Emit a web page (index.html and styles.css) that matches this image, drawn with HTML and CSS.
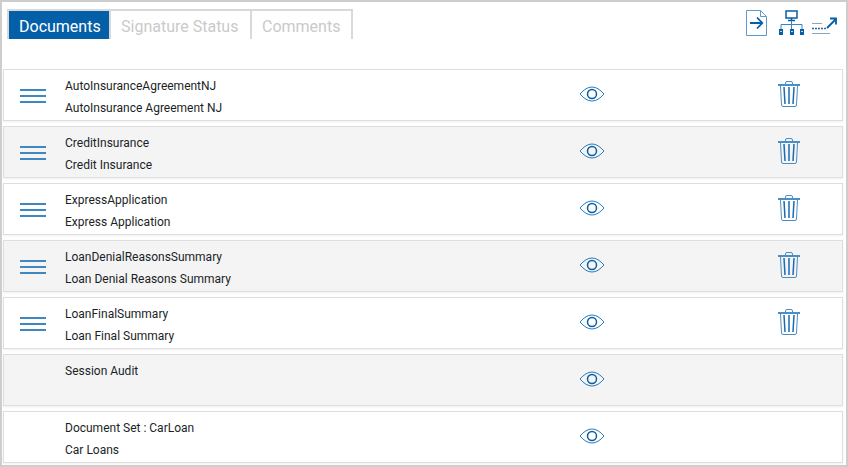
FILE: index.html
```
<!DOCTYPE html>
<html lang="en">
<head>
<meta charset="utf-8">
<title>Documents</title>
<link rel="stylesheet" href="styles.css">
</head>
<body>
<svg class="sprite" width="0" height="0" aria-hidden="true">
  <symbol id="drag" viewBox="0 0 26 16"><path d="M0 2h26M0 8h26M0 14h26" fill="none" stroke="#3e87c1" stroke-width="2"/></symbol>
  <symbol id="eye" viewBox="0 0 26 18"><path d="M1 9Q7 2 13 2T25 9Q19 16 13 16T1 9Z" fill="none" stroke="#2d7bb9" stroke-width="1"/><circle cx="13" cy="9" r="4.5" fill="none" stroke="#045fa9" stroke-width="1.5"/></symbol>
  <symbol id="trash" viewBox="0 0 22 26"><g fill="none" stroke="#4a8ec5"><path d="M0 4h22" stroke-width="2"/><path d="M7.500 4V2q0-1.500 1.500-1.500h4q1.500 0 1.500 1.500v2M2.500 5l1 19q.1 1.500 1.500 1.500h12q1.400 0 1.500-1.500l1-19"/><path d="M6 6l1 17M11 6v17M16 6l-1 17" stroke="#1b6bb0" stroke-width="1.500"/></g></symbol>
</svg>
<main class="panel">
  <header class="bar">
    <nav class="tabs" aria-label="Sections">
      <button class="tab active" type="button">Documents</button>
      <button class="tab" type="button">Signature Status</button>
      <button class="tab" type="button">Comments</button>
    </nav>
    <div class="tools">
      <button class="icon" type="button" aria-label="Export document"><svg width="26" height="28" viewBox="0 0 26 28" fill="none"><path d="M.5 1.500h14l6 6v19H.5zM14.500 1.500v6h6" stroke="#5c9bcb"/><path d="M4 14h12M11 8.500l5.300 5.500-5.300 5.500" stroke="#045fa9" stroke-width="1.800"/></svg></button>
      <button class="icon" type="button" aria-label="Distribute"><svg width="26" height="28" viewBox="0 0 26 28" fill="none"><path d="M7 2h11v7H7z" stroke="#045fa9" stroke-width="1.500"/><path d="M12.500 9v2.500M9 11.500h7" stroke="#045fa9" stroke-width="1.500"/><path d="M12.500 12v8M2 20v-4.500h21V20" stroke="#3b84bf"/><path d="M0 20h4v6H0zM11 20h4v6h-4zM21 20h4v6h-4z" fill="#045fa9"/><path d="M1 22.500h2M12 22.500h2M22 22.500h2" stroke="#b9d5ea"/></svg></button>
      <button class="icon" type="button" aria-label="Signing order"><svg width="26" height="28" viewBox="0 0 26 28" fill="none"><path d="M0 14.500h10M0 24.500h18" stroke="#8fa3b8"/><path d="M0 19.500h14" stroke="#35659b" stroke-width="1.500" stroke-dasharray="2 1"/><path d="M15 19l9-9M18 9.500h6v6" stroke="#045fa9" stroke-width="1.800"/></svg></button>
    </div>
  </header>
  <ul class="list">
    <li class="row"><button class="icon drag" type="button" aria-label="Reorder"><svg width="26" height="16"><use href="#drag"/></svg></button><div class="text"><p>AutoInsuranceAgreementNJ</p><p>AutoInsurance Agreement NJ</p></div><button class="icon" type="button" aria-label="View"><svg width="26" height="18"><use href="#eye"/></svg></button><button class="icon" type="button" aria-label="Delete"><svg width="22" height="26"><use href="#trash"/></svg></button></li>
    <li class="row"><button class="icon drag" type="button" aria-label="Reorder"><svg width="26" height="16"><use href="#drag"/></svg></button><div class="text"><p>CreditInsurance</p><p>Credit Insurance</p></div><button class="icon" type="button" aria-label="View"><svg width="26" height="18"><use href="#eye"/></svg></button><button class="icon" type="button" aria-label="Delete"><svg width="22" height="26"><use href="#trash"/></svg></button></li>
    <li class="row"><button class="icon drag" type="button" aria-label="Reorder"><svg width="26" height="16"><use href="#drag"/></svg></button><div class="text"><p>ExpressApplication</p><p>Express Application</p></div><button class="icon" type="button" aria-label="View"><svg width="26" height="18"><use href="#eye"/></svg></button><button class="icon" type="button" aria-label="Delete"><svg width="22" height="26"><use href="#trash"/></svg></button></li>
    <li class="row"><button class="icon drag" type="button" aria-label="Reorder"><svg width="26" height="16"><use href="#drag"/></svg></button><div class="text"><p>LoanDenialReasonsSummary</p><p>Loan Denial Reasons Summary</p></div><button class="icon" type="button" aria-label="View"><svg width="26" height="18"><use href="#eye"/></svg></button><button class="icon" type="button" aria-label="Delete"><svg width="22" height="26"><use href="#trash"/></svg></button></li>
    <li class="row"><button class="icon drag" type="button" aria-label="Reorder"><svg width="26" height="16"><use href="#drag"/></svg></button><div class="text"><p>LoanFinalSummary</p><p>Loan Final Summary</p></div><button class="icon" type="button" aria-label="View"><svg width="26" height="18"><use href="#eye"/></svg></button><button class="icon" type="button" aria-label="Delete"><svg width="22" height="26"><use href="#trash"/></svg></button></li>
    <li class="row"><span></span><div class="text"><p>Session Audit</p></div><button class="icon" type="button" aria-label="View"><svg width="26" height="18"><use href="#eye"/></svg></button></li>
    <li class="row"><span></span><div class="text"><p>Document Set : CarLoan</p><p>Car Loans</p></div><button class="icon" type="button" aria-label="View"><svg width="26" height="18"><use href="#eye"/></svg></button></li>
  </ul>
</main>
</body>
</html>
```
FILE: styles.css
```
* { box-sizing: border-box; margin: 0; padding: 0; }
body { background: #fff; color: #1b1f27; font: 12px/22px Roboto, sans-serif; }
button { font: inherit; background: none; border: 0; cursor: pointer; }
svg { display: block; }
.sprite { position: absolute; }
.panel { min-height: 100vh; border: 2px solid #cdcdcd; }
.bar { display: flex; justify-content: space-between; align-items: flex-start; padding: 7px 8px 0 5px; margin-bottom: 30px; }
.tabs { display: grid; grid-template-columns: 100px 141px 101px; border: 2px solid #d9d9d9; border-bottom: 0; }
.tab { height: 28px; padding: 4px 0 0 10px; color: #cacaca; font-size: 16px; line-height: 24px; text-align: left; white-space: nowrap; }
.tab + .tab { border-left: 2px solid #d9d9d9; }
.tab.active { background: #045fa9; color: #fff; }
.tools { display: flex; gap: 7px; }
.list { list-style: none; display: grid; gap: 5px; padding: 0 3px 2px 1px; }
.row { display: grid; grid-template-columns: 61px 4fr 3fr 106px; min-height: 52px; background: #fff; border: 1px solid #dedede; box-shadow: 0 1px 2px #f0f0f0; }
.row:nth-child(even) { background: #f4f4f4; }
.text { padding: 5px 0 1px; }
.icon { display: grid; place-items: center; }
.row .icon { padding-bottom: 2px; }
.row .drag { padding: 2px 3px 0 0; }
```
